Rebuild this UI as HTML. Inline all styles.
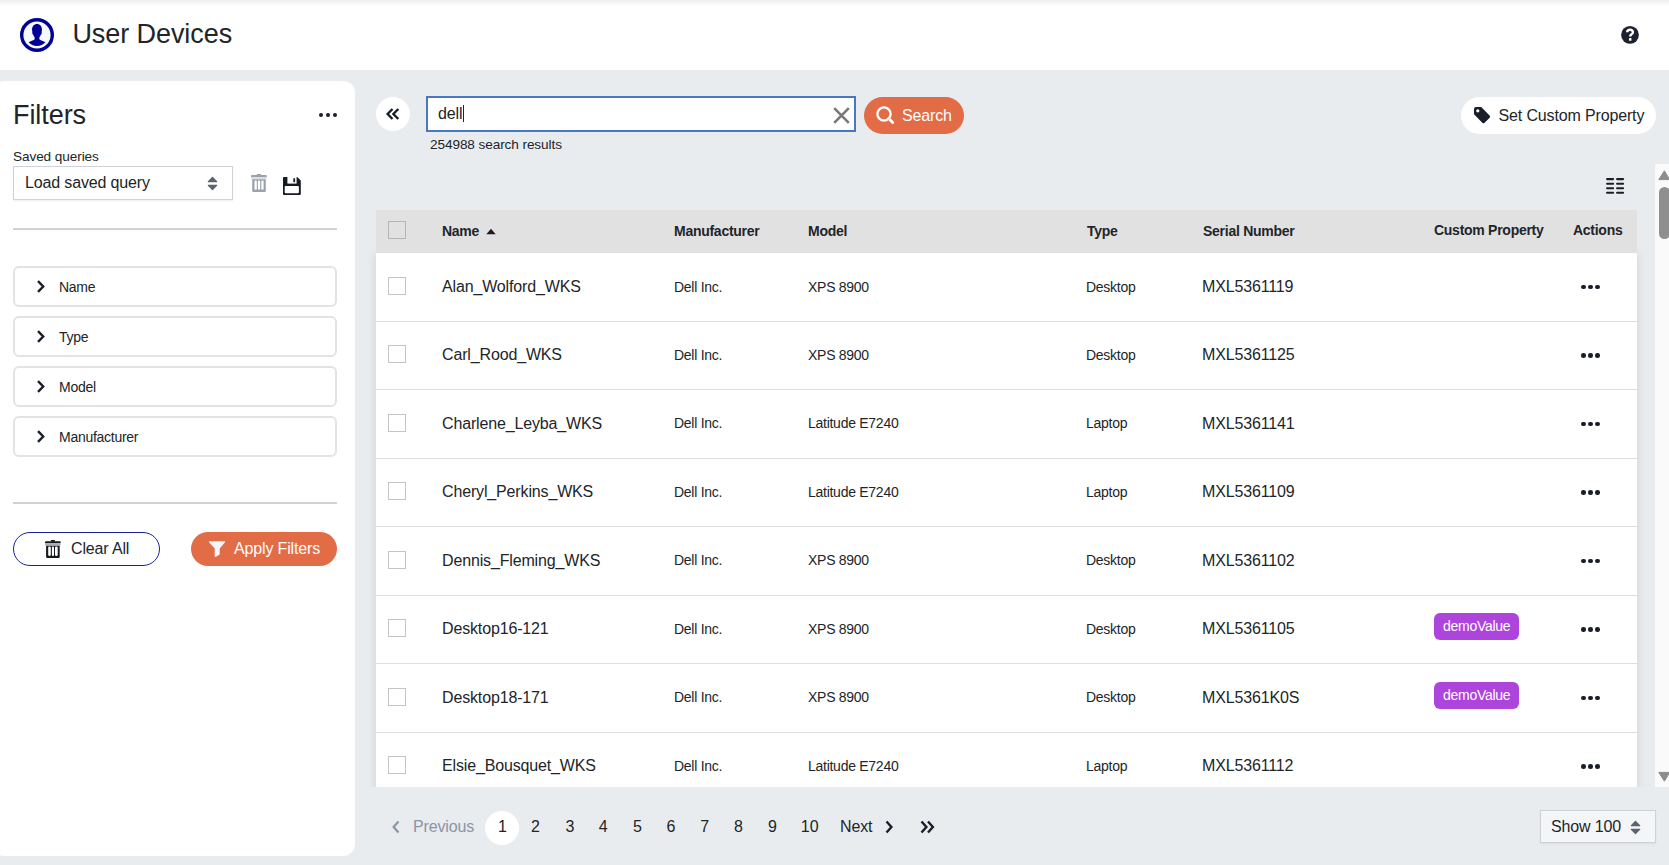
<!DOCTYPE html>
<html><head><meta charset="utf-8">
<style>
*{box-sizing:border-box;margin:0;padding:0}
html,body{width:1669px;height:865px;overflow:hidden}
body{background:#e9ecef;font-family:"Liberation Sans",sans-serif;color:#212529;position:relative}
.b{position:absolute}
.t{position:absolute;white-space:nowrap}
</style></head>
<body>
<div class="b" style="left:0px;top:0px;width:1669px;height:70px;background:#fff"></div>
<div class="b" style="left:0px;top:0px;width:1669px;height:1px;background:#efefef"></div>
<div class="b" style="left:0px;top:1px;width:1669px;height:1px;background:#f2f2f2"></div>
<div class="b" style="left:0px;top:2px;width:1669px;height:1px;background:#f5f5f5"></div>
<div class="b" style="left:0px;top:3px;width:1669px;height:1px;background:#f8f8f8"></div>
<div class="b" style="left:0px;top:4px;width:1669px;height:1px;background:#fbfbfb"></div>
<div class="b" style="left:0px;top:5px;width:1669px;height:1px;background:#fdfdfd"></div>
<div class="b" style="left:0px;top:6px;width:1669px;height:1px;background:#fefefe"></div>
<svg class="b" style="left:19px;top:17px" width="36" height="36" viewBox="0 0 36 36">
  <circle cx="18" cy="18" r="15.3" fill="#f7f8fa" stroke="#000096" stroke-width="3.4"/>
  <path transform="translate(18 6.9) scale(1.08 1.1) translate(-18 -6.2)" d="M18 6.2c-2.8 0-4.6 2.2-4.6 5.2 0 1 .2 1.8.4 2.4-.3.1-.3.6-.2 1 .2.8.6 1.2.9 1.2.3 1 .8 1.8 1.3 2.4v1.7c-.8.9-2.6 1.5-5.6 2.7 1.9 2.2 4.7 3.5 7.8 3.5s5.9-1.3 7.8-3.5c-3-1.2-4.8-1.8-5.6-2.7v-1.7c.5-.6 1-1.4 1.3-2.4.3 0 .7-.4.9-1.2.1-.4.1-.9-.2-1 .2-.6.4-1.4.4-2.4 0-3-1.8-5.2-4.6-5.2z" fill="#000096"/>
</svg>
<div class="t" style="left:72.4px;top:20.54px;font-size:27px;line-height:27px;letter-spacing:-0.07px;color:#212529;">User Devices</div>
<svg class="b" style="left:1620px;top:25px" width="20" height="20" viewBox="0 0 20 20">
  <circle cx="10" cy="9.9" r="8.9" fill="#1c212b"/>
  <path d="M7.2 7.3C7.2 5.7 8.4 4.8 10.1 4.8C11.8 4.8 12.9 5.8 12.9 7.2C12.9 8.5 12 9.1 11.2 9.6C10.5 10.1 10.2 10.5 10.2 11.6" fill="none" stroke="#fff" stroke-width="2.4"/>
  <rect x="8.95" y="13.1" width="2.5" height="2.6" fill="#fff"/>
</svg>
<div class="b" style="left:-8px;top:81px;width:363px;height:775px;background:#fff;border-radius:12px"></div>
<div class="t" style="left:13px;top:102.14px;font-size:27px;line-height:27px;letter-spacing:-0.07px;color:#212529;">Filters</div>
<div class="b" style="left:318.9px;top:112.8px;width:4.4px;height:4.4px;background:#1a1e28;border-radius:50%"></div>
<div class="b" style="left:325.7px;top:112.8px;width:4.4px;height:4.4px;background:#1a1e28;border-radius:50%"></div>
<div class="b" style="left:332.5px;top:112.8px;width:4.4px;height:4.4px;background:#1a1e28;border-radius:50%"></div>
<div class="t" style="left:13px;top:150.29px;font-size:13.6px;line-height:13.6px;letter-spacing:-0.09px;color:#212529;">Saved queries</div>
<div class="b" style="left:13px;top:166px;width:220px;height:34px;background:#fff;border:1px solid #cfd2d6;box-shadow:0 1px 2px rgba(0,0,0,0.07)"></div>
<div class="t" style="left:25px;top:174.56px;font-size:16px;line-height:16px;letter-spacing:-0.15px;color:#212529;">Load saved query</div>
<svg class="b" style="left:207px;top:176px" width="11" height="15" viewBox="0 0 11 15">
<path d="M5.5 1.3 L9.7 5.6 H1.3z M1.3 9.4 H9.7 L5.5 13.7z" fill="#5b6372" stroke="#5b6372" stroke-width="1.2" stroke-linejoin="round"/></svg>
<svg class="b" style="left:251px;top:174px" width="17" height="19" viewBox="0 0 17 19">
<g fill="#9ca2ab">
<rect x="5.6" y="0" width="4.6" height="2" rx="0.8"/>
<rect x="0" y="1" width="15.8" height="2.3" rx="0.9"/><rect x="0.2" y="3.2" width="15.4" height="2.1" fill="#d9dce0"/>
<path d="M1.2 5.2H14.8V17a1 1 0 0 1-1 1H2.2a1 1 0 0 1-1-1z"/></g>
<g fill="#fff"><rect x="3.5" y="6.6" width="2.3" height="9.2" rx="1"/><rect x="6.9" y="6.6" width="2.2" height="9.2" rx="1"/><rect x="10.3" y="6.6" width="2.3" height="9.2" rx="1"/></g>
</svg>
<svg class="b" style="left:283px;top:177px" width="18" height="18" viewBox="0 0 18 18">
<path d="M1 0H14.2L17.8 3.6V17a1 1 0 0 1-1 1H1a1 1 0 0 1-1-1V1a1 1 0 0 1 1-1z" fill="#161a22"/>
<path d="M4.4 0H13.6V6.6H4.4z" fill="#fff"/>
<rect x="10.3" y="1.2" width="1.8" height="4.1" rx="0.5" fill="#161a22"/>
<rect x="1.7" y="8.9" width="14.2" height="7.4" rx="1" fill="#fff"/>
</svg>
<div class="b" style="left:13px;top:228px;width:324px;height:2px;background:#d2d2d2"></div>
<div class="b" style="left:13px;top:266px;width:324px;height:40.5px;border:2px solid #e3e3e3;border-radius:6px"></div>
<svg class="b" style="left:36px;top:280px" width="10" height="13" viewBox="0 0 10 13">
<path d="M2 1.2 L7.2 6.5 L2 11.8" fill="none" stroke="#1a1e28" stroke-width="2.4"/></svg>
<div class="t" style="left:59px;top:280.25px;font-size:14px;line-height:14px;letter-spacing:-0.27px;color:#212529;">Name</div>
<div class="b" style="left:13px;top:316px;width:324px;height:40.5px;border:2px solid #e3e3e3;border-radius:6px"></div>
<svg class="b" style="left:36px;top:330px" width="10" height="13" viewBox="0 0 10 13">
<path d="M2 1.2 L7.2 6.5 L2 11.8" fill="none" stroke="#1a1e28" stroke-width="2.4"/></svg>
<div class="t" style="left:59px;top:330.25px;font-size:14px;line-height:14px;letter-spacing:-0.27px;color:#212529;">Type</div>
<div class="b" style="left:13px;top:366px;width:324px;height:40.5px;border:2px solid #e3e3e3;border-radius:6px"></div>
<svg class="b" style="left:36px;top:380px" width="10" height="13" viewBox="0 0 10 13">
<path d="M2 1.2 L7.2 6.5 L2 11.8" fill="none" stroke="#1a1e28" stroke-width="2.4"/></svg>
<div class="t" style="left:59px;top:380.25px;font-size:14px;line-height:14px;letter-spacing:-0.27px;color:#212529;">Model</div>
<div class="b" style="left:13px;top:416px;width:324px;height:40.5px;border:2px solid #e3e3e3;border-radius:6px"></div>
<svg class="b" style="left:36px;top:430px" width="10" height="13" viewBox="0 0 10 13">
<path d="M2 1.2 L7.2 6.5 L2 11.8" fill="none" stroke="#1a1e28" stroke-width="2.4"/></svg>
<div class="t" style="left:59px;top:430.25px;font-size:14px;line-height:14px;letter-spacing:-0.27px;color:#212529;">Manufacturer</div>
<div class="b" style="left:13px;top:502px;width:324px;height:2px;background:#d2d2d2"></div>
<div class="b" style="left:13px;top:532px;width:147px;height:34px;border:1px solid #1c2096;border-radius:17px"></div>
<svg class="b" style="left:45px;top:539.8px" width="17" height="19" viewBox="0 0 17 19">
<g fill="#161a22">
<rect x="5.8" y="0" width="4.2" height="1.8" rx="0.8"/>
<rect x="0" y="1.2" width="15.7" height="2.1" rx="0.9"/>
<path d="M1.1 5.6H14.7V16.9a1 1 0 0 1-1 1H2.1a1 1 0 0 1-1-1z"/></g>
<rect x="0.2" y="3.2" width="15.3" height="2.4" fill="#a9acb1"/>
<g fill="#fff"><rect x="3.2" y="6.5" width="2.6" height="9.4" rx="1.1"/><rect x="6.9" y="6.5" width="2.1" height="9.4" rx="1"/><rect x="10" y="6.5" width="2.7" height="9.4" rx="1.1"/></g>
</svg>
<div class="t" style="left:71px;top:541.46px;font-size:16px;line-height:16px;letter-spacing:-0.15px;color:#212529;">Clear All</div>
<div class="b" style="left:191px;top:532px;width:146px;height:34px;background:#e26c45;border-radius:17px"></div>
<svg class="b" style="left:208px;top:541px" width="18" height="17" viewBox="0 0 18 17">
<path d="M1.2 0.2H16.6Q17.6 0.3 17 1.2L11.7 7.6V13.4L7.6 15.9Q6.7 16.2 6.7 15.2V7.6L1 1.2Q0.5 0.3 1.2 0.2z" fill="#f5f6f8"/></svg>
<div class="t" style="left:234px;top:541.46px;font-size:16px;line-height:16px;letter-spacing:-0.15px;color:#fff;">Apply Filters</div>
<div class="b" style="left:376px;top:97px;width:34px;height:34px;background:#fff;border-radius:50%"></div>
<svg class="b" style="left:385px;top:106px" width="16" height="16" viewBox="0 0 16 16">
<path d="M7.5 3 L2.6 8 L7.5 13 M13.3 3 L8.4 8 L13.3 13" fill="none" stroke="#1a1e28" stroke-width="2.4"/></svg>
<div class="b" style="left:426px;top:96px;width:430px;height:36px;background:#fff;border:2px solid #4a78c0"></div>
<div class="t" style="left:438px;top:105.66px;font-size:16px;line-height:16px;letter-spacing:-0.15px;color:#212529;">dell</div>
<div class="b" style="left:463px;top:105px;width:1.2px;height:17px;background:#212529"></div>
<svg class="b" style="left:832px;top:106px" width="19" height="19" viewBox="0 0 19 19">
<path d="M2.2 2.2 L16.8 16.8 M16.8 2.2 L2.2 16.8" stroke="#787878" stroke-width="2.6"/></svg>
<div class="t" style="left:430px;top:138.29px;font-size:13.6px;line-height:13.6px;letter-spacing:-0.09px;color:#212529;">254988 search results</div>
<div class="b" style="left:864px;top:97px;width:100px;height:37px;background:#e26c45;border-radius:18.5px"></div>
<svg class="b" style="left:875px;top:105px" width="21" height="21" viewBox="0 0 21 21">
<circle cx="9" cy="9" r="6.6" fill="none" stroke="#fff" stroke-width="2.3"/>
<path d="M13.6 13.6 L17.7 17.6" stroke="#fff" stroke-width="2.8" stroke-linecap="round"/></svg>
<div class="t" style="left:902px;top:108.06px;font-size:16px;line-height:16px;letter-spacing:-0.15px;color:#fff;">Search</div>
<div class="b" style="left:1461px;top:97px;width:195px;height:37px;background:#fff;border-radius:18.5px"></div>
<svg class="b" style="left:1473px;top:106px" width="18" height="18" viewBox="0 0 18 18">
<path d="M3 1h5.2l8.4 8.4a1.6 1.6 0 0 1 0 2.3l-5 5a1.6 1.6 0 0 1-2.3 0L1 8.3V3a2 2 0 0 1 2-2z" fill="#1a1e28"/>
<circle cx="4.8" cy="4.8" r="1.6" fill="#fff"/></svg>
<div class="t" style="left:1498.6px;top:107.86px;font-size:16px;line-height:16px;letter-spacing:-0.15px;color:#212529;">Set Custom Property</div>
<div class="b" style="left:356px;top:210px;width:1299px;height:577px;overflow:hidden"><div class="b" style="left:20px;top:43px;width:1261px;height:600px;background:#fff;box-shadow:0 0 10px rgba(0,0,0,0.10)"></div>
</div>
<div class="b" style="left:376px;top:210px;width:1261px;height:43px;background:#e1e1e1"></div>
<svg class="b" style="left:1605px;top:177px" width="21" height="18" viewBox="0 0 21 18">
<g stroke="#1a1e28" stroke-width="2.1" stroke-linecap="round">
<path d="M2.1 2.1H8.1M12.1 2.1H18.1M2.1 6.7H8.1M12.1 6.7H18.1M2.1 11.2H8.1M12.1 11.2H18.1M2.1 15.7H8.1M12.1 15.7H18.1"/></g></svg>
<div class="b" style="left:388px;top:221px;width:18px;height:18px;border:1px solid #b5b5b5"></div>
<div class="t" style="left:442px;top:224.15px;font-size:14px;line-height:14px;letter-spacing:-0.27px;font-weight:700;color:#212529;">Name</div>
<svg class="b" style="left:486px;top:228px" width="10" height="7" viewBox="0 0 10 7">
<path d="M0.3 6.2 L5 0.8 L9.7 6.2z" fill="#1a1e28"/></svg>
<div class="t" style="left:674px;top:224.15px;font-size:14px;line-height:14px;letter-spacing:-0.27px;font-weight:700;color:#212529;">Manufacturer</div>
<div class="t" style="left:808px;top:224.15px;font-size:14px;line-height:14px;letter-spacing:-0.27px;font-weight:700;color:#212529;">Model</div>
<div class="t" style="left:1087px;top:224.15px;font-size:14px;line-height:14px;letter-spacing:-0.27px;font-weight:700;color:#212529;">Type</div>
<div class="t" style="left:1203px;top:224.15px;font-size:14px;line-height:14px;letter-spacing:-0.27px;font-weight:700;color:#212529;">Serial Number</div>
<div class="t" style="left:1434px;top:223.15px;font-size:14px;line-height:14px;letter-spacing:-0.27px;font-weight:700;color:#212529;">Custom Property</div>
<div class="t" style="left:1573px;top:223.15px;font-size:14px;line-height:14px;letter-spacing:-0.27px;font-weight:700;color:#212529;">Actions</div>
<div class="b" style="left:376px;top:320.5px;width:1261px;height:1px;background:#dedede"></div>
<div class="b" style="left:388px;top:277px;width:18px;height:18px;border:1px solid #c4c4c4;background:#fff"></div>
<div class="t" style="left:442px;top:278.66px;font-size:16px;line-height:16px;letter-spacing:-0.15px;color:#212529;">Alan_Wolford_WKS</div>
<div class="t" style="left:674px;top:279.65px;font-size:14px;line-height:14px;letter-spacing:-0.27px;color:#212529;">Dell Inc.</div>
<div class="t" style="left:808px;top:279.65px;font-size:14px;line-height:14px;letter-spacing:-0.27px;color:#212529;">XPS 8900</div>
<div class="t" style="left:1086px;top:279.65px;font-size:14px;line-height:14px;letter-spacing:-0.27px;color:#212529;">Desktop</div>
<div class="t" style="left:1202px;top:278.66px;font-size:16px;line-height:16px;letter-spacing:-0.15px;color:#212529;">MXL5361119</div>
<div class="b" style="left:1581.2px;top:284.8px;width:4.6px;height:4.6px;background:#1a1e28;border-radius:50%"></div>
<div class="b" style="left:1588.1000000000001px;top:284.8px;width:4.6px;height:4.6px;background:#1a1e28;border-radius:50%"></div>
<div class="b" style="left:1595.0px;top:284.8px;width:4.6px;height:4.6px;background:#1a1e28;border-radius:50%"></div>
<div class="b" style="left:376px;top:389.0px;width:1261px;height:1px;background:#dedede"></div>
<div class="b" style="left:388px;top:345px;width:18px;height:18px;border:1px solid #c4c4c4;background:#fff"></div>
<div class="t" style="left:442px;top:346.66px;font-size:16px;line-height:16px;letter-spacing:-0.15px;color:#212529;">Carl_Rood_WKS</div>
<div class="t" style="left:674px;top:347.55px;font-size:14px;line-height:14px;letter-spacing:-0.27px;color:#212529;">Dell Inc.</div>
<div class="t" style="left:808px;top:347.55px;font-size:14px;line-height:14px;letter-spacing:-0.27px;color:#212529;">XPS 8900</div>
<div class="t" style="left:1086px;top:347.55px;font-size:14px;line-height:14px;letter-spacing:-0.27px;color:#212529;">Desktop</div>
<div class="t" style="left:1202px;top:346.66px;font-size:16px;line-height:16px;letter-spacing:-0.15px;color:#212529;">MXL5361125</div>
<div class="b" style="left:1581.2px;top:353.3px;width:4.6px;height:4.6px;background:#1a1e28;border-radius:50%"></div>
<div class="b" style="left:1588.1000000000001px;top:353.3px;width:4.6px;height:4.6px;background:#1a1e28;border-radius:50%"></div>
<div class="b" style="left:1595.0px;top:353.3px;width:4.6px;height:4.6px;background:#1a1e28;border-radius:50%"></div>
<div class="b" style="left:376px;top:457.5px;width:1261px;height:1px;background:#dedede"></div>
<div class="b" style="left:388px;top:414px;width:18px;height:18px;border:1px solid #c4c4c4;background:#fff"></div>
<div class="t" style="left:442px;top:415.66px;font-size:16px;line-height:16px;letter-spacing:-0.15px;color:#212529;">Charlene_Leyba_WKS</div>
<div class="t" style="left:674px;top:416.05px;font-size:14px;line-height:14px;letter-spacing:-0.27px;color:#212529;">Dell Inc.</div>
<div class="t" style="left:808px;top:416.05px;font-size:14px;line-height:14px;letter-spacing:-0.27px;color:#212529;">Latitude E7240</div>
<div class="t" style="left:1086px;top:416.05px;font-size:14px;line-height:14px;letter-spacing:-0.27px;color:#212529;">Laptop</div>
<div class="t" style="left:1202px;top:415.66px;font-size:16px;line-height:16px;letter-spacing:-0.15px;color:#212529;">MXL5361141</div>
<div class="b" style="left:1581.2px;top:421.8px;width:4.6px;height:4.6px;background:#1a1e28;border-radius:50%"></div>
<div class="b" style="left:1588.1000000000001px;top:421.8px;width:4.6px;height:4.6px;background:#1a1e28;border-radius:50%"></div>
<div class="b" style="left:1595.0px;top:421.8px;width:4.6px;height:4.6px;background:#1a1e28;border-radius:50%"></div>
<div class="b" style="left:376px;top:526.0px;width:1261px;height:1px;background:#dedede"></div>
<div class="b" style="left:388px;top:482px;width:18px;height:18px;border:1px solid #c4c4c4;background:#fff"></div>
<div class="t" style="left:442px;top:483.66px;font-size:16px;line-height:16px;letter-spacing:-0.15px;color:#212529;">Cheryl_Perkins_WKS</div>
<div class="t" style="left:674px;top:484.55px;font-size:14px;line-height:14px;letter-spacing:-0.27px;color:#212529;">Dell Inc.</div>
<div class="t" style="left:808px;top:484.55px;font-size:14px;line-height:14px;letter-spacing:-0.27px;color:#212529;">Latitude E7240</div>
<div class="t" style="left:1086px;top:484.55px;font-size:14px;line-height:14px;letter-spacing:-0.27px;color:#212529;">Laptop</div>
<div class="t" style="left:1202px;top:483.66px;font-size:16px;line-height:16px;letter-spacing:-0.15px;color:#212529;">MXL5361109</div>
<div class="b" style="left:1581.2px;top:490.3px;width:4.6px;height:4.6px;background:#1a1e28;border-radius:50%"></div>
<div class="b" style="left:1588.1000000000001px;top:490.3px;width:4.6px;height:4.6px;background:#1a1e28;border-radius:50%"></div>
<div class="b" style="left:1595.0px;top:490.3px;width:4.6px;height:4.6px;background:#1a1e28;border-radius:50%"></div>
<div class="b" style="left:376px;top:594.5px;width:1261px;height:1px;background:#dedede"></div>
<div class="b" style="left:388px;top:551px;width:18px;height:18px;border:1px solid #c4c4c4;background:#fff"></div>
<div class="t" style="left:442px;top:552.66px;font-size:16px;line-height:16px;letter-spacing:-0.15px;color:#212529;">Dennis_Fleming_WKS</div>
<div class="t" style="left:674px;top:553.05px;font-size:14px;line-height:14px;letter-spacing:-0.27px;color:#212529;">Dell Inc.</div>
<div class="t" style="left:808px;top:553.05px;font-size:14px;line-height:14px;letter-spacing:-0.27px;color:#212529;">XPS 8900</div>
<div class="t" style="left:1086px;top:553.05px;font-size:14px;line-height:14px;letter-spacing:-0.27px;color:#212529;">Desktop</div>
<div class="t" style="left:1202px;top:552.66px;font-size:16px;line-height:16px;letter-spacing:-0.15px;color:#212529;">MXL5361102</div>
<div class="b" style="left:1581.2px;top:558.8px;width:4.6px;height:4.6px;background:#1a1e28;border-radius:50%"></div>
<div class="b" style="left:1588.1000000000001px;top:558.8px;width:4.6px;height:4.6px;background:#1a1e28;border-radius:50%"></div>
<div class="b" style="left:1595.0px;top:558.8px;width:4.6px;height:4.6px;background:#1a1e28;border-radius:50%"></div>
<div class="b" style="left:376px;top:663.0px;width:1261px;height:1px;background:#dedede"></div>
<div class="b" style="left:388px;top:619px;width:18px;height:18px;border:1px solid #c4c4c4;background:#fff"></div>
<div class="t" style="left:442px;top:620.66px;font-size:16px;line-height:16px;letter-spacing:-0.15px;color:#212529;">Desktop16-121</div>
<div class="t" style="left:674px;top:621.55px;font-size:14px;line-height:14px;letter-spacing:-0.27px;color:#212529;">Dell Inc.</div>
<div class="t" style="left:808px;top:621.55px;font-size:14px;line-height:14px;letter-spacing:-0.27px;color:#212529;">XPS 8900</div>
<div class="t" style="left:1086px;top:621.55px;font-size:14px;line-height:14px;letter-spacing:-0.27px;color:#212529;">Desktop</div>
<div class="t" style="left:1202px;top:620.66px;font-size:16px;line-height:16px;letter-spacing:-0.15px;color:#212529;">MXL5361105</div>
<div class="b" style="left:1434px;top:613.0px;width:85px;height:27px;background:#ad44dc;border-radius:6px"></div>
<div class="t" style="left:1443px;top:619.25px;font-size:14px;line-height:14px;letter-spacing:-0.27px;color:#fff;">demoValue</div>
<div class="b" style="left:1581.2px;top:627.3px;width:4.6px;height:4.6px;background:#1a1e28;border-radius:50%"></div>
<div class="b" style="left:1588.1000000000001px;top:627.3px;width:4.6px;height:4.6px;background:#1a1e28;border-radius:50%"></div>
<div class="b" style="left:1595.0px;top:627.3px;width:4.6px;height:4.6px;background:#1a1e28;border-radius:50%"></div>
<div class="b" style="left:376px;top:731.5px;width:1261px;height:1px;background:#dedede"></div>
<div class="b" style="left:388px;top:688px;width:18px;height:18px;border:1px solid #c4c4c4;background:#fff"></div>
<div class="t" style="left:442px;top:689.66px;font-size:16px;line-height:16px;letter-spacing:-0.15px;color:#212529;">Desktop18-171</div>
<div class="t" style="left:674px;top:690.05px;font-size:14px;line-height:14px;letter-spacing:-0.27px;color:#212529;">Dell Inc.</div>
<div class="t" style="left:808px;top:690.05px;font-size:14px;line-height:14px;letter-spacing:-0.27px;color:#212529;">XPS 8900</div>
<div class="t" style="left:1086px;top:690.05px;font-size:14px;line-height:14px;letter-spacing:-0.27px;color:#212529;">Desktop</div>
<div class="t" style="left:1202px;top:689.66px;font-size:16px;line-height:16px;letter-spacing:-0.15px;color:#212529;">MXL5361K0S</div>
<div class="b" style="left:1434px;top:681.5px;width:85px;height:27px;background:#ad44dc;border-radius:6px"></div>
<div class="t" style="left:1443px;top:687.75px;font-size:14px;line-height:14px;letter-spacing:-0.27px;color:#fff;">demoValue</div>
<div class="b" style="left:1581.2px;top:695.8px;width:4.6px;height:4.6px;background:#1a1e28;border-radius:50%"></div>
<div class="b" style="left:1588.1000000000001px;top:695.8px;width:4.6px;height:4.6px;background:#1a1e28;border-radius:50%"></div>
<div class="b" style="left:1595.0px;top:695.8px;width:4.6px;height:4.6px;background:#1a1e28;border-radius:50%"></div>
<div class="b" style="left:388px;top:756px;width:18px;height:18px;border:1px solid #c4c4c4;background:#fff"></div>
<div class="t" style="left:442px;top:757.66px;font-size:16px;line-height:16px;letter-spacing:-0.15px;color:#212529;">Elsie_Bousquet_WKS</div>
<div class="t" style="left:674px;top:758.55px;font-size:14px;line-height:14px;letter-spacing:-0.27px;color:#212529;">Dell Inc.</div>
<div class="t" style="left:808px;top:758.55px;font-size:14px;line-height:14px;letter-spacing:-0.27px;color:#212529;">Latitude E7240</div>
<div class="t" style="left:1086px;top:758.55px;font-size:14px;line-height:14px;letter-spacing:-0.27px;color:#212529;">Laptop</div>
<div class="t" style="left:1202px;top:757.66px;font-size:16px;line-height:16px;letter-spacing:-0.15px;color:#212529;">MXL5361112</div>
<div class="b" style="left:1581.2px;top:764.3px;width:4.6px;height:4.6px;background:#1a1e28;border-radius:50%"></div>
<div class="b" style="left:1588.1000000000001px;top:764.3px;width:4.6px;height:4.6px;background:#1a1e28;border-radius:50%"></div>
<div class="b" style="left:1595.0px;top:764.3px;width:4.6px;height:4.6px;background:#1a1e28;border-radius:50%"></div>
<div class="b" style="left:1655px;top:164px;width:14px;height:623px;background:#fafafa"></div>
<svg class="b" style="left:1655px;top:167px" width="14" height="16" viewBox="0 0 14 16">
<path d="M9.4 3.8 L14.6 12.6 H3.8z" fill="#8c8c8c" stroke="#8c8c8c" stroke-width="1" stroke-linejoin="round"/></svg>
<div class="b" style="left:1659px;top:187px;width:11px;height:52px;background:#8f8f8f;border-radius:5.5px"></div>
<svg class="b" style="left:1655px;top:768px" width="14" height="16" viewBox="0 0 14 16">
<path d="M3.8 4.4 H14.6 L9.4 13.2z" fill="#8c8c8c" stroke="#8c8c8c" stroke-width="1" stroke-linejoin="round"/></svg>
<svg class="b" style="left:391px;top:820px" width="10" height="14" viewBox="0 0 10 14">
<path d="M7.5 1.5 L2.6 7 L7.5 12.5" fill="none" stroke="#8a94a5" stroke-width="2.2"/></svg>
<div class="t" style="left:413px;top:818.86px;font-size:16px;line-height:16px;letter-spacing:-0.15px;color:#8a94a5;">Previous</div>
<div class="b" style="left:485px;top:810.5px;width:34px;height:34px;background:#fff;border-radius:50%"></div>
<div class="t" style="left:482.4px;width:40px;text-align:center;top:818.86px;font-size:16px;line-height:16px;color:#212529">1</div>
<div class="t" style="left:515.5px;width:40px;text-align:center;top:818.86px;font-size:16px;line-height:16px;color:#212529">2</div>
<div class="t" style="left:549.9px;width:40px;text-align:center;top:818.86px;font-size:16px;line-height:16px;color:#212529">3</div>
<div class="t" style="left:583.3px;width:40px;text-align:center;top:818.86px;font-size:16px;line-height:16px;color:#212529">4</div>
<div class="t" style="left:617.4px;width:40px;text-align:center;top:818.86px;font-size:16px;line-height:16px;color:#212529">5</div>
<div class="t" style="left:651.0px;width:40px;text-align:center;top:818.86px;font-size:16px;line-height:16px;color:#212529">6</div>
<div class="t" style="left:684.6999999999999px;width:40px;text-align:center;top:818.86px;font-size:16px;line-height:16px;color:#212529">7</div>
<div class="t" style="left:718.4px;width:40px;text-align:center;top:818.86px;font-size:16px;line-height:16px;color:#212529">8</div>
<div class="t" style="left:752.4px;width:40px;text-align:center;top:818.86px;font-size:16px;line-height:16px;color:#212529">9</div>
<div class="t" style="left:789.6999999999999px;width:40px;text-align:center;top:818.86px;font-size:16px;line-height:16px;color:#212529">10</div>
<div class="t" style="left:840px;top:818.86px;font-size:16px;line-height:16px;letter-spacing:-0.15px;color:#212529;">Next</div>
<svg class="b" style="left:884px;top:820px" width="10" height="14" viewBox="0 0 10 14">
<path d="M2.5 1.5 L7.4 7 L2.5 12.5" fill="none" stroke="#1a1e28" stroke-width="2.4"/></svg>
<svg class="b" style="left:919px;top:820px" width="17" height="14" viewBox="0 0 17 14">
<path d="M2.5 1.5 L7.4 7 L2.5 12.5 M9 1.5 L13.9 7 L9 12.5" fill="none" stroke="#1a1e28" stroke-width="2.4"/></svg>
<div class="b" style="left:1540px;top:810px;width:116px;height:33px;background:#f4f5f7;border:1px solid #cfd1d4;box-shadow:0 1px 2px rgba(0,0,0,0.06)"></div>
<div class="t" style="left:1551px;top:818.86px;font-size:16px;line-height:16px;letter-spacing:-0.15px;color:#212529;">Show 100</div>
<svg class="b" style="left:1630px;top:820px" width="11" height="15" viewBox="0 0 11 15">
<path d="M5.5 1.3 L9.7 5.6 H1.3z M1.3 9.4 H9.7 L5.5 13.7z" fill="#5b6372" stroke="#5b6372" stroke-width="1.2" stroke-linejoin="round"/></svg>
</body></html>
